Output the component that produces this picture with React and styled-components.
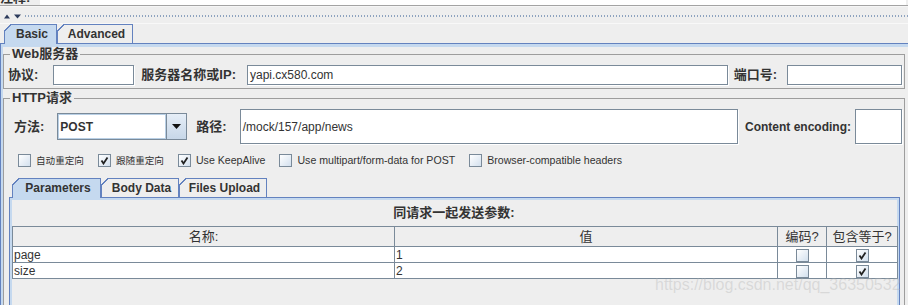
import React from "react";
import styled, { createGlobalStyle } from "styled-components";

const GlobalStyle = createGlobalStyle`
  * { box-sizing: border-box; }
  html, body { margin: 0; padding: 0; background: #eeeeee; }
  body {
    font-family: "Liberation Sans", Arial, "Noto Sans CJK SC", sans-serif;
    font-size: 12px;
    color: #333333;
  }
`;

const BLUE = "#6382bf";
const LIGHT = "#c5d9ef";
const GRID = "#7a8a99";

const Window = styled.div`
  position: relative;
  width: 908px;
  height: 305px;
  overflow: hidden;
  background: #eeeeee;
`;

const CommentRow = styled.div`
  display: flex;
  height: 6px;
  border-bottom: 1px solid #a3a3a3;
  overflow: hidden;
`;
const CommentLabel = styled.div`
  width: 40px;
  margin-top: -9px;
  font-weight: bold;
  font-size: 13px;
  line-height: 14px;
`;
const CommentField = styled.div`
  flex: 1;
  background: #fff;
  margin-right: 2px;
`;

const Divider = styled.div`
  display: flex;
  align-items: flex-start;
  height: 18px;
  padding-top: 7px;
  border-top: 1px solid #f6f6f6;
  border-bottom: 1px solid #f8f8f8;
`;
const Dots = styled.div`
  flex: 1;
  height: 2px;
  margin: 1px 0 0 3px;
  background: repeating-linear-gradient(90deg, #8ea3bf 0 1px, transparent 1px 3px);
`;

const TabStrip = styled.div`
  display: flex;
  align-items: flex-end;
  height: 19px;
  padding-left: ${(p) => p.$indent}px;
`;
const Tab = styled.div`
  position: relative;
  width: ${(p) => p.$w}px;
  height: ${(p) => (p.$active ? 20 : 19)}px;
  margin-bottom: ${(p) => (p.$active ? -1 : 0)}px;
  z-index: ${(p) => (p.$active ? 1 : 0)};
  border: 1px solid ${BLUE};
  border-bottom: none;
  background: ${(p) => (p.$active ? LIGHT : "#eeeeee")};
  font-weight: bold;
  font-size: 12px;
  line-height: 18px;
  text-align: center;
  padding-left: 3px;
  color: #333;
  &::before {
    content: "";
    position: absolute;
    top: -1px;
    left: -1px;
    width: 7px;
    height: 7px;
    background: linear-gradient(
      135deg,
      #eeeeee 0 calc(50% - 0.6px),
      ${BLUE} calc(50% - 0.6px) calc(50% + 0.8px),
      transparent calc(50% + 0.8px)
    );
  }
`;

const Panel = styled.div`
  border-top: 1px solid ${BLUE};
  border-left: 1px solid ${BLUE};
  box-shadow: inset 0 3px 0 ${LIGHT}, inset 2px 0 0 ${LIGHT};
  padding: 3px 0 0 2px;
`;

const Group = styled.fieldset`
  margin: ${(p) => p.$top}px 3px 0 0;
  padding: 0 2px 0 0;
  border: 1px solid #9d9d9d;
  min-width: 0;
`;
const Legend = styled.legend`
  margin-left: 6px;
  padding: 0 2px;
  font-weight: bold;
  font-size: 13px;
  line-height: 14px;
`;

const FieldRow = styled.div`
  display: flex;
  align-items: center;
  height: ${(p) => p.$h}px;
  margin-top: 4px;
  margin-bottom: ${(p) => p.$mb || 0}px;
  padding-left: ${(p) => p.$pl}px;
`;
const Label = styled.span`
  font-weight: bold;
  font-size: 13px;
  line-height: 16px;
  white-space: nowrap;
  margin-left: ${(p) => p.$ml || 0}px;
  margin-right: ${(p) => p.$mr || 8}px;
`;
const LatinLabel = styled(Label)`
  font-size: 12px;
`;
const Input = styled.div`
  flex: ${(p) => (p.$w ? "none" : "1")};
  width: ${(p) => (p.$w ? `${p.$w}px` : "auto")};
  height: ${(p) => p.$h}px;
  background: #fff;
  border: 1px solid ${GRID};
  box-shadow: 1px 1px 0 #ffffff;
  padding-left: 2px;
  display: flex;
  align-items: center;
  font-size: 12px;
  color: #333;
`;

const Combo = styled.div`
  display: flex;
  width: 130px;
  height: 27px;
  border: 1px solid ${GRID};
  margin-right: 9px;
`;
const ComboValue = styled.div`
  flex: 1;
  background: #fff;
  box-shadow: inset 0 0 0 1px #b8cfe5;
  display: flex;
  align-items: center;
  padding-left: 2px;
  font-weight: bold;
  font-size: 12px;
`;
const ComboButton = styled.div`
  width: 20px;
  border-left: 1px solid ${GRID};
  background: linear-gradient(180deg, #e6eef7 0%, #c7d7e8 100%);
  display: flex;
  align-items: center;
  justify-content: center;
`;

const CheckRow = styled.div`
  display: flex;
  align-items: center;
  height: 13px;
  margin-top: 10px;
  padding-left: 14px;
`;
const CheckItem = styled.label`
  display: flex;
  align-items: center;
  margin-right: 14px;
  font-size: ${(p) => (p.$cjk ? 9.6 : 10.6)}px;
  line-height: 13px;
  white-space: nowrap;
`;
const Box = styled.span`
  display: inline-flex;
  align-items: center;
  justify-content: center;
  width: 13px;
  height: 13px;
  border: 1px solid ${GRID};
  background: linear-gradient(135deg, #ffffff 0%, #d3e0ee 100%);
  margin-right: ${(p) => p.$mr ?? 5}px;
`;

const InnerStrip = styled(TabStrip)`
  margin-top: 11px;
`;
const InnerPanel = styled.div`
  margin: 0 2px 0 5px;
  height: 120px;
  border: 1px solid ${BLUE};
  border-bottom: none;
  box-shadow: inset 0 2px 0 ${LIGHT}, inset 2px 0 0 ${LIGHT}, inset -2px 0 0 ${LIGHT};
  padding: 2px 3px 0 2px;
`;
const PanelTitle = styled.div`
  height: 26px;
  line-height: 26px;
  text-align: center;
  font-weight: bold;
  font-size: 13px;
`;
const Table = styled.table`
  width: 100%;
  border-collapse: collapse;
  table-layout: fixed;
`;
const Th = styled.th`
  height: 20px;
  padding: 0;
  border: 1px solid ${GRID};
  background: #eeeeee;
  font-weight: normal;
  font-size: 13px;
  line-height: 17px;
  color: #333;
  text-align: center;
`;
const Td = styled.td`
  height: 16px;
  padding: 0 0 0 1px;
  border: 1px solid ${GRID};
  background: #fff;
  font-size: 12px;
  line-height: 14px;
  text-align: ${(p) => (p.$center ? "center" : "left")};
  vertical-align: middle;
`;
const CellBox = styled(Box)`
  vertical-align: middle;
  margin: 0;
`;

const Watermark = styled.div`
  position: absolute;
  left: 655px;
  top: 276px;
  font-size: 16px;
  color: rgba(175, 175, 175, 0.35);
  white-space: nowrap;
`;

function Tick() {
  return (
    <svg width="9" height="9" viewBox="0 0 9 9">
      <path d="M1.5 4.5 L3.5 7.5 L7.5 1.5" fill="none" stroke="#222" strokeWidth="1.8" />
    </svg>
  );
}

function Check({ on, cjk, children }) {
  return (
    <CheckItem $cjk={cjk}>
      <Box>{on && <Tick />}</Box>
      {children}
    </CheckItem>
  );
}

const params = [
  { name: "page", value: "1" },
  { name: "size", value: "2" },
];

export default function App() {
  return (
    <Window>
      <GlobalStyle />
      <CommentRow>
        <CommentLabel>注释:</CommentLabel>
        <CommentField />
      </CommentRow>
      <Divider>
        <svg width="22" height="5" viewBox="0 0 22 5">
          <polygon points="4,4.5 7,0.5 10,4.5" fill="#2c3b5c" />
          <polygon points="14,0.5 21,0.5 17.5,4.5" fill="#2c3b5c" />
        </svg>
        <Dots />
      </Divider>

      <TabStrip $indent={4}>
        <Tab $w={53} $active>Basic</Tab>
        <Tab $w={76}>Advanced</Tab>
      </TabStrip>
      <Panel>
        <Group $top={0}>
          <Legend>Web服务器</Legend>
          <FieldRow $h={20} $mb={3} $pl={4}>
            <Label $mr={15}>协议:</Label>
            <Input $w={81} $h={20} />
            <Label $ml={7} $mr={11}>服务器名称或IP:</Label>
            <Input $h={20}>yapi.cx580.com</Input>
            <Label $ml={6} $mr={10}>端口号:</Label>
            <Input $w={115} $h={20} />
          </FieldRow>
        </Group>
        <Group $top={2}>
          <Legend>HTTP请求</Legend>
          <FieldRow $h={35} $pl={10}>
            <Label $mr={13}>方法:</Label>
            <Combo>
              <ComboValue>POST</ComboValue>
              <ComboButton>
                <svg width="9" height="5" viewBox="0 0 9 5">
                  <polygon points="0,0 9,0 4.5,5" fill="#111" />
                </svg>
              </ComboButton>
            </Combo>
            <Label $mr={13}>路径:</Label>
            <Input $h={35}>/mock/157/app/news</Input>
            <LatinLabel $ml={7} $mr={4}>Content encoding:</LatinLabel>
            <Input $w={47} $h={35} />
          </FieldRow>
          <CheckRow>
            <Check cjk>自动重定向</Check>
            <Check cjk on>跟随重定向</Check>
            <Check on>Use KeepAlive</Check>
            <Check>Use multipart/form-data for POST</Check>
            <Check>Browser-compatible headers</Check>
          </CheckRow>
          <InnerStrip $indent={8}>
            <Tab $w={89} $active>Parameters</Tab>
            <Tab $w={78}>Body Data</Tab>
            <Tab $w={88}>Files Upload</Tab>
          </InnerStrip>
          <InnerPanel>
            <PanelTitle>同请求一起发送参数:</PanelTitle>
            <Table>
              <colgroup>
                <col style={{ width: 382 }} />
                <col style={{ width: 383 }} />
                <col style={{ width: 49 }} />
                <col style={{ width: 71 }} />
              </colgroup>
              <thead>
                <tr>
                  <Th>名称:</Th>
                  <Th>值</Th>
                  <Th>编码?</Th>
                  <Th>包含等于?</Th>
                </tr>
              </thead>
              <tbody>
                {params.map((p) => (
                  <tr key={p.name}>
                    <Td>{p.name}</Td>
                    <Td>{p.value}</Td>
                    <Td $center>
                      <CellBox />
                    </Td>
                    <Td $center>
                      <CellBox>
                        <Tick />
                      </CellBox>
                    </Td>
                  </tr>
                ))}
              </tbody>
            </Table>
          </InnerPanel>
        </Group>
      </Panel>
      <Watermark>https://blog.csdn.net/qq_36350532</Watermark>
    </Window>
  );
}
